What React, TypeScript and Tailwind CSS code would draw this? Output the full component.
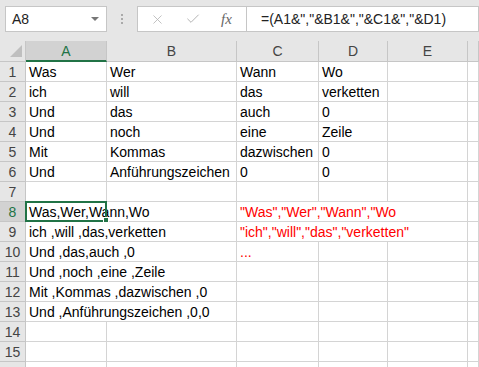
import React from "react"
import { X, Check } from "lucide-react"

const cols = "grid grid-cols-[26px_81px_130px_82px_69px_80px_1fr]"
const font = { fontFamily: '"Liberation Sans", Arial, sans-serif' }

const top: string[][] = [
  ["Was", "Wer", "Wann", "Wo"],
  ["ich", "will", "das", "verketten"],
  ["Und", "das", "auch", "0"],
  ["Und", "noch", "eine", "Zeile"],
  ["Mit", "Kommas", "dazwischen", "0"],
  ["Und", "Anführungszeichen", "0", "0"],
]

const joined = [
  "Was,Wer,Wann,Wo",
  "ich ,will ,das,verketten",
  "Und ,das,auch ,0",
  "Und ,noch ,eine ,Zeile",
  "Mit ,Kommas ,dazwischen ,0",
  "Und ,Anführungszeichen ,0,0",
]

const quoted: Record<number, string> = {
  8: '"Was","Wer","Wann","Wo',
  9: '"ich","will","das","verketten"',
  10: "...",
}

const cell = "h-[20px] border-r border-b border-[#d4d4d4] pl-[3px] leading-[20px] whitespace-nowrap overflow-hidden"

function RowHead({ n, active }: { n?: number; active?: boolean }) {
  return (
    <div
      className={
        "h-[20px] border-r border-b border-[#c6c6c6] text-center leading-[20px] " +
        (active ? "bg-[#d2d2d2] text-[#217346]" : "bg-[#e6e6e6] text-[#444]")
      }
    >
      {n}
    </div>
  )
}

const App = () => {
  const rows: React.ReactNode[] = []

  top.forEach((r, i) => {
    rows.push(
      <div key={"t" + i} className={cols}>
        <RowHead n={i + 1} />
        {r.map((v, j) => (
          <div key={j} className={cell}>{v}</div>
        ))}
        <div className={cell}></div>
        <div className={cell}></div>
      </div>
    )
  })

  rows.push(
    <div key="r7" className={cols}>
      <RowHead n={7} />
      {[0, 1, 2, 3, 4, 5].map((j) => <div key={j} className={cell}></div>)}
    </div>
  )

  joined.forEach((v, i) => {
    const n = i + 8
    const q = quoted[n]
    rows.push(
      <div key={"j" + i} className={cols}>
        <RowHead n={n} active={n === 8} />
        <div className={cell + " col-span-2 relative overflow-visible"}>
          {v}
          {n === 8 && (
            <>
              <div className="absolute left-[-1px] top-[-1px] w-[82px] h-[21px] border-2 border-[#217346]"></div>
              <div className="absolute left-[77px] top-[15px] w-[6px] h-[6px] bg-[#217346] border border-white"></div>
            </>
          )}
        </div>
        {n <= 9 ? (
          <div className={cell + " col-span-3 text-[#ff0000]"}>{q}</div>
        ) : (
          <>
            <div className={cell + " text-[#ff0000]"}>{q ?? ""}</div>
            <div className={cell}></div>
            <div className={cell}></div>
          </>
        )}
        <div className={cell}></div>
      </div>
    )
  })

  ;[14, 15, undefined].forEach((n, k) => {
    rows.push(
      <div key={"e" + k} className={cols}>
        <RowHead n={n} />
        {[0, 1, 2, 3, 4, 5].map((j) => <div key={j} className={cell}></div>)}
      </div>
    )
  })

  return (
    <div className="w-[479px] h-[367px] overflow-hidden bg-white text-[14px] text-black" style={font}>
      {/* formula bar */}
      <div className="h-[41px] bg-[#e6e6e6] flex items-start pt-[6px] pl-[5px]">
        <div className="w-[102px] h-[26px] border border-[#c6c6c6] bg-white flex items-center justify-between pl-[6px] pr-[7px] text-[#222]">
          <span>A8</span>
          <span className="w-0 h-0 border-l-[4px] border-r-[4px] border-t-[4px] border-l-transparent border-r-transparent border-t-[#777]"></span>
        </div>
        <div className="w-[30px] h-[26px] flex flex-col items-center justify-center gap-[2px]">
          <span className="w-[2px] h-[2px] bg-[#aaa]"></span>
          <span className="w-[2px] h-[2px] bg-[#aaa]"></span>
          <span className="w-[2px] h-[2px] bg-[#aaa]"></span>
        </div>
        <div className="w-[110px] h-[26px] border border-[#c6c6c6] bg-white flex items-center">
          <X size={15} strokeWidth={1.3} className="text-[#b4b4b4] ml-[12px]" />
          <Check size={16} strokeWidth={1.5} className="text-[#b4b4b4] ml-[20px]" />
          <span className="ml-[20px] italic text-[#666] text-[15px]" style={{ fontFamily: '"Liberation Serif", serif' }}>fx</span>
        </div>
        <div className="flex-1 h-[26px] border border-l-0 border-[#c6c6c6] bg-white flex items-center pl-[14px] text-[#222] whitespace-nowrap overflow-hidden">
          =(A1&amp;","&amp;B1&amp;","&amp;C1&amp;","&amp;D1)
        </div>
      </div>

      {/* column headers */}
      <div className={cols + " bg-[#e6e6e6] text-[#444]"}>
        <div className="h-[21px] border-r border-b border-[#c6c6c6] relative">
          <svg width="26" height="21" className="absolute left-0 top-0">
            <polygon points="10,16 22,16 22,4" fill="#bfbfbf" />
          </svg>
        </div>
        <div className="h-[21px] border-r border-[#c6c6c6] border-b-2 border-b-[#217346] bg-[#d2d2d2] text-[#217346] text-center leading-[21px]">A</div>
        {["B", "C", "D", "E", ""].map((c) => (
          <div key={c} className="h-[21px] border-r border-b border-[#c6c6c6] text-center leading-[21px]">{c}</div>
        ))}
      </div>

      {rows}
    </div>
  )
}

export default App
